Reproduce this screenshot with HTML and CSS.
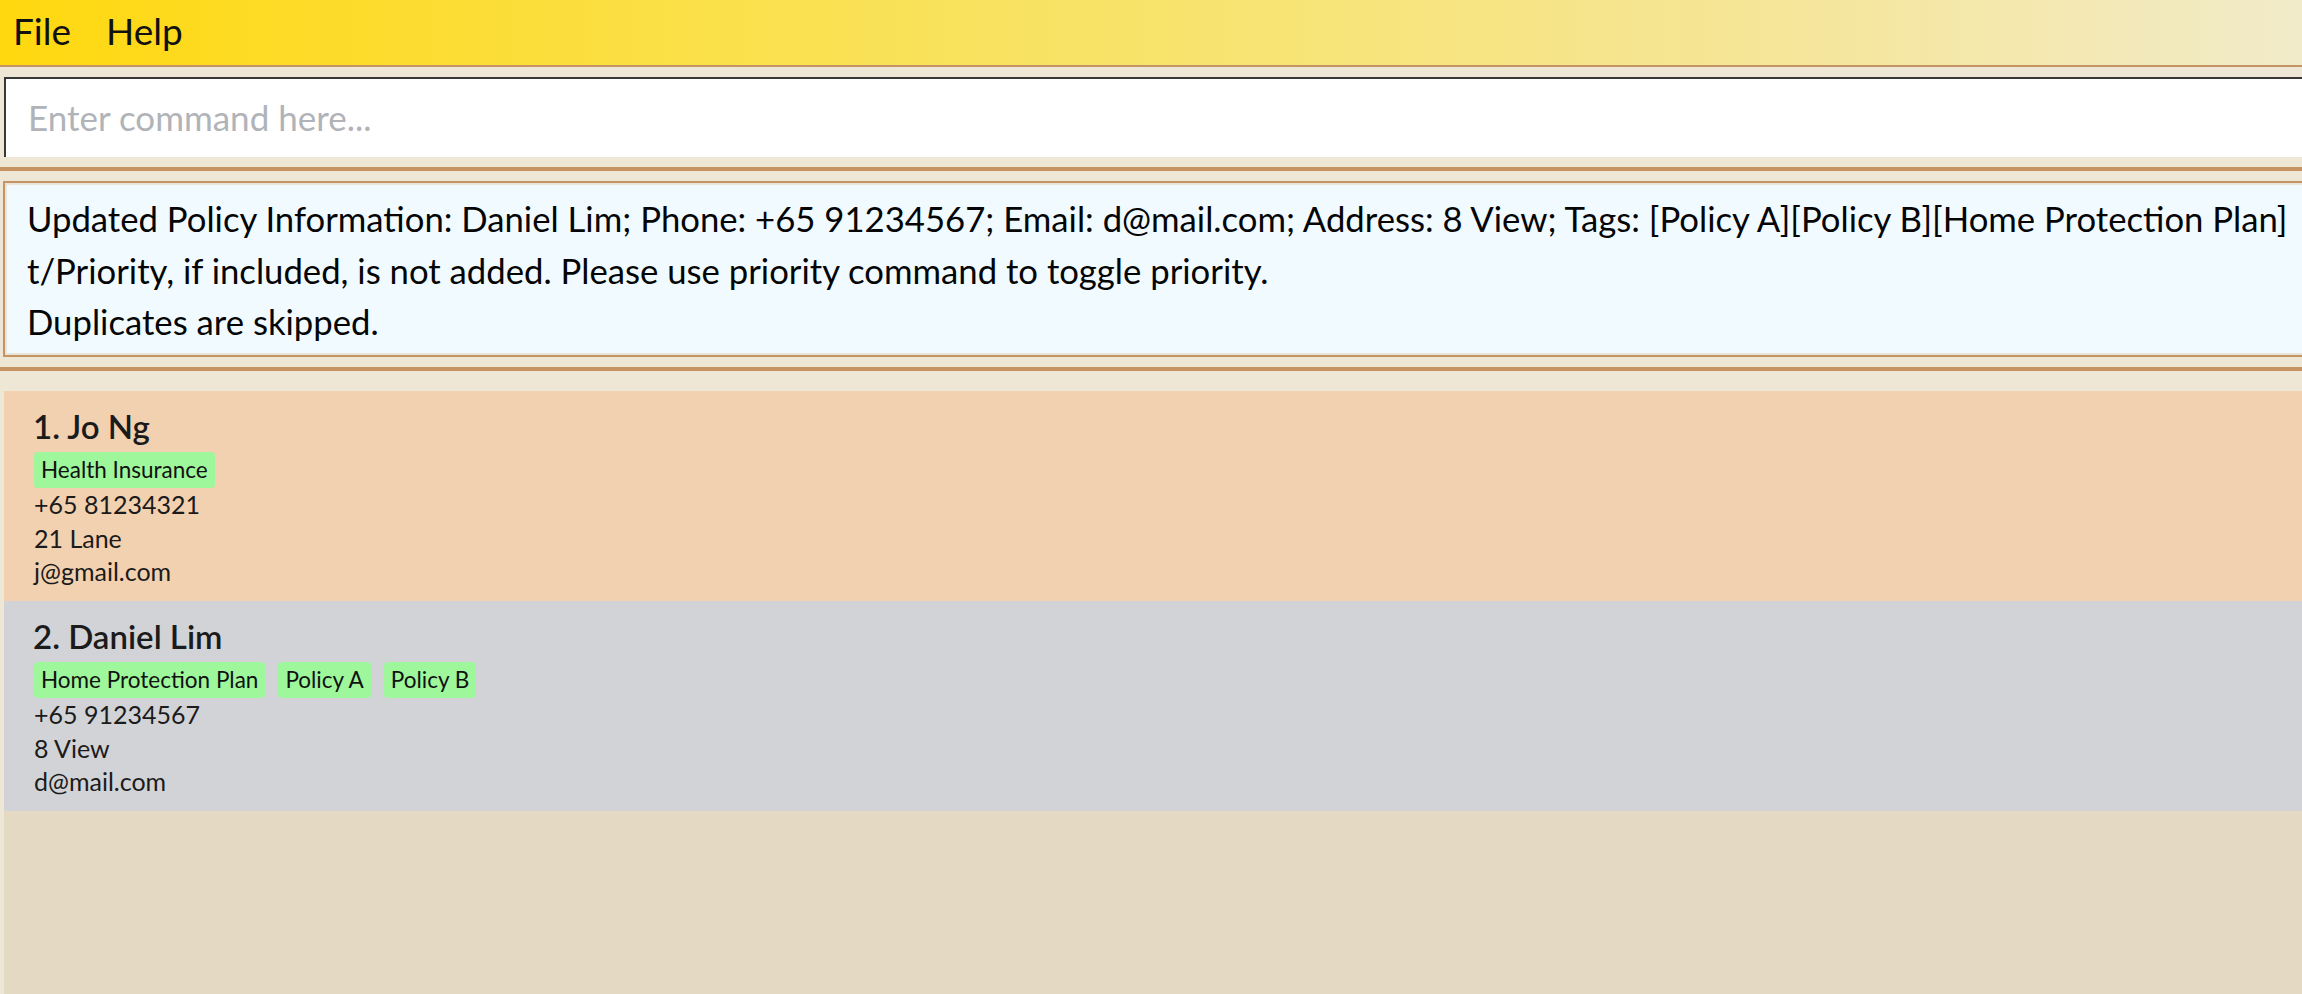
FILE: index.html
```html
<!DOCTYPE html>
<html>
<head>
<meta charset="utf-8">
<link rel="stylesheet" href="styles.css">
</head>
<body>
<div class="app">
  <div class="menubar">
    <span class="menu-item">File</span>
    <span class="menu-item">Help</span>
  </div>
  <div class="command-pane">
    <input class="command-input" type="text" placeholder="Enter command here...">
  </div>
  <div class="divider"></div>
  <div class="result-pane">
    <div class="result-box">
      <div class="result-line">Updated Policy Information: Daniel Lim; Phone: +65 91234567; Email: d@mail.com; Address: 8 View; Tags: [Policy A][Policy B][Home Protection Plan]</div>
      <div class="result-line">t/Priority, if included, is not added. Please use priority command to toggle priority.</div>
      <div class="result-line">Duplicates are skipped.</div>
    </div>
  </div>
  <div class="divider"></div>
  <div class="list-pane">
    <div class="person-list">
      <div class="card card-odd">
        <div class="card-name">1. Jo Ng</div>
        <div class="tags">
          <span class="tag">Health Insurance</span>
        </div>
        <div class="card-field">+65 81234321</div>
        <div class="card-field">21 Lane</div>
        <div class="card-field">j@gmail.com</div>
      </div>
      <div class="card card-even">
        <div class="card-name">2. Daniel Lim</div>
        <div class="tags">
          <span class="tag">Home Protection Plan</span>
          <span class="tag">Policy A</span>
          <span class="tag">Policy B</span>
        </div>
        <div class="card-field">+65 91234567</div>
        <div class="card-field">8 View</div>
        <div class="card-field">d@mail.com</div>
      </div>
    </div>
  </div>
</div>
</body>
</html>
```
FILE: styles.css
```css
html, body {
  margin: 0;
  padding: 0;
  height: 100%;
  overflow: hidden;
}

body {
  background: #efe7d6;
  font-family: Lato, "Noto Sans", sans-serif;
  color: #000;
}

.app {
  display: flex;
  flex-direction: column;
  height: 994px;
}

.menubar {
  height: 65px;
  border-bottom: 2px solid #c49464;
  background: linear-gradient(to right, #ffd80f 0%, #f9e25a 40%, #f5e69e 80%, #f1ebc9 100%);
  display: flex;
  align-items: center;
  padding-left: 13px;
  gap: 35px;
  flex-shrink: 0;
}

.menu-item {
  font-size: 37px;
  color: #111;
  line-height: 1;
  padding-bottom: 4px;
}

.command-pane {
  padding: 10px 0 10px 4px;
  flex-shrink: 0;
}

.command-input {
  display: block;
  box-sizing: border-box;
  width: 100%;
  height: 80px;
  margin: 0;
  border: none;
  border-top: 2px solid #383838;
  border-left: 2px solid #383838;
  background: #fff;
  padding: 0 0 2px 22px;
  font-family: Lato, "Noto Sans", sans-serif;
  font-size: 35px;
  outline: none;
}

.command-input::placeholder {
  color: #b0b3b8;
}

.divider {
  height: 4px;
  background: #c49464;
  flex-shrink: 0;
}

.result-pane {
  padding: 10px 0 10px 3px;
  flex-shrink: 0;
  overflow: hidden;
}

.result-box {
  box-sizing: border-box;
  height: 176px;
  margin-right: -20px;
  border: 2px solid #c49464;
  border-right: none;
  box-shadow: inset 0 0 0 2px #e9e5db;
  background: #f0faff;
  padding: 10px 0 0 22px;
  overflow: hidden;
}

.result-line {
  font-size: 34.7px;
  line-height: 51.5px;
  white-space: nowrap;
  color: #050505;
}

.list-pane {
  flex: 1;
  padding: 20px 0 0 4px;
  display: flex;
  flex-direction: column;
}

.person-list {
  flex: 1;
  background: #e4d9c3;
}

.card {
  box-sizing: border-box;
  height: 210px;
  padding: 13px 0 0 30px;
  color: #1b1b1b;
}

.card-odd {
  background: #f2d1b0;
}

.card-even {
  background: #d2d3d7;
}

.card-name {
  font-size: 33px;
  font-weight: 600;
  line-height: 44px;
  margin-left: -1px;
}

.tags {
  display: flex;
  gap: 13px;
  margin-top: 4px;
}

.tag {
  background: #9ef79b;
  border-radius: 4px;
  font-size: 22.5px;
  line-height: 36px;
  height: 36px;
  padding: 0 7px;
  color: #111;
}

.card-field {
  font-size: 25px;
  line-height: 33.5px;
}
```
